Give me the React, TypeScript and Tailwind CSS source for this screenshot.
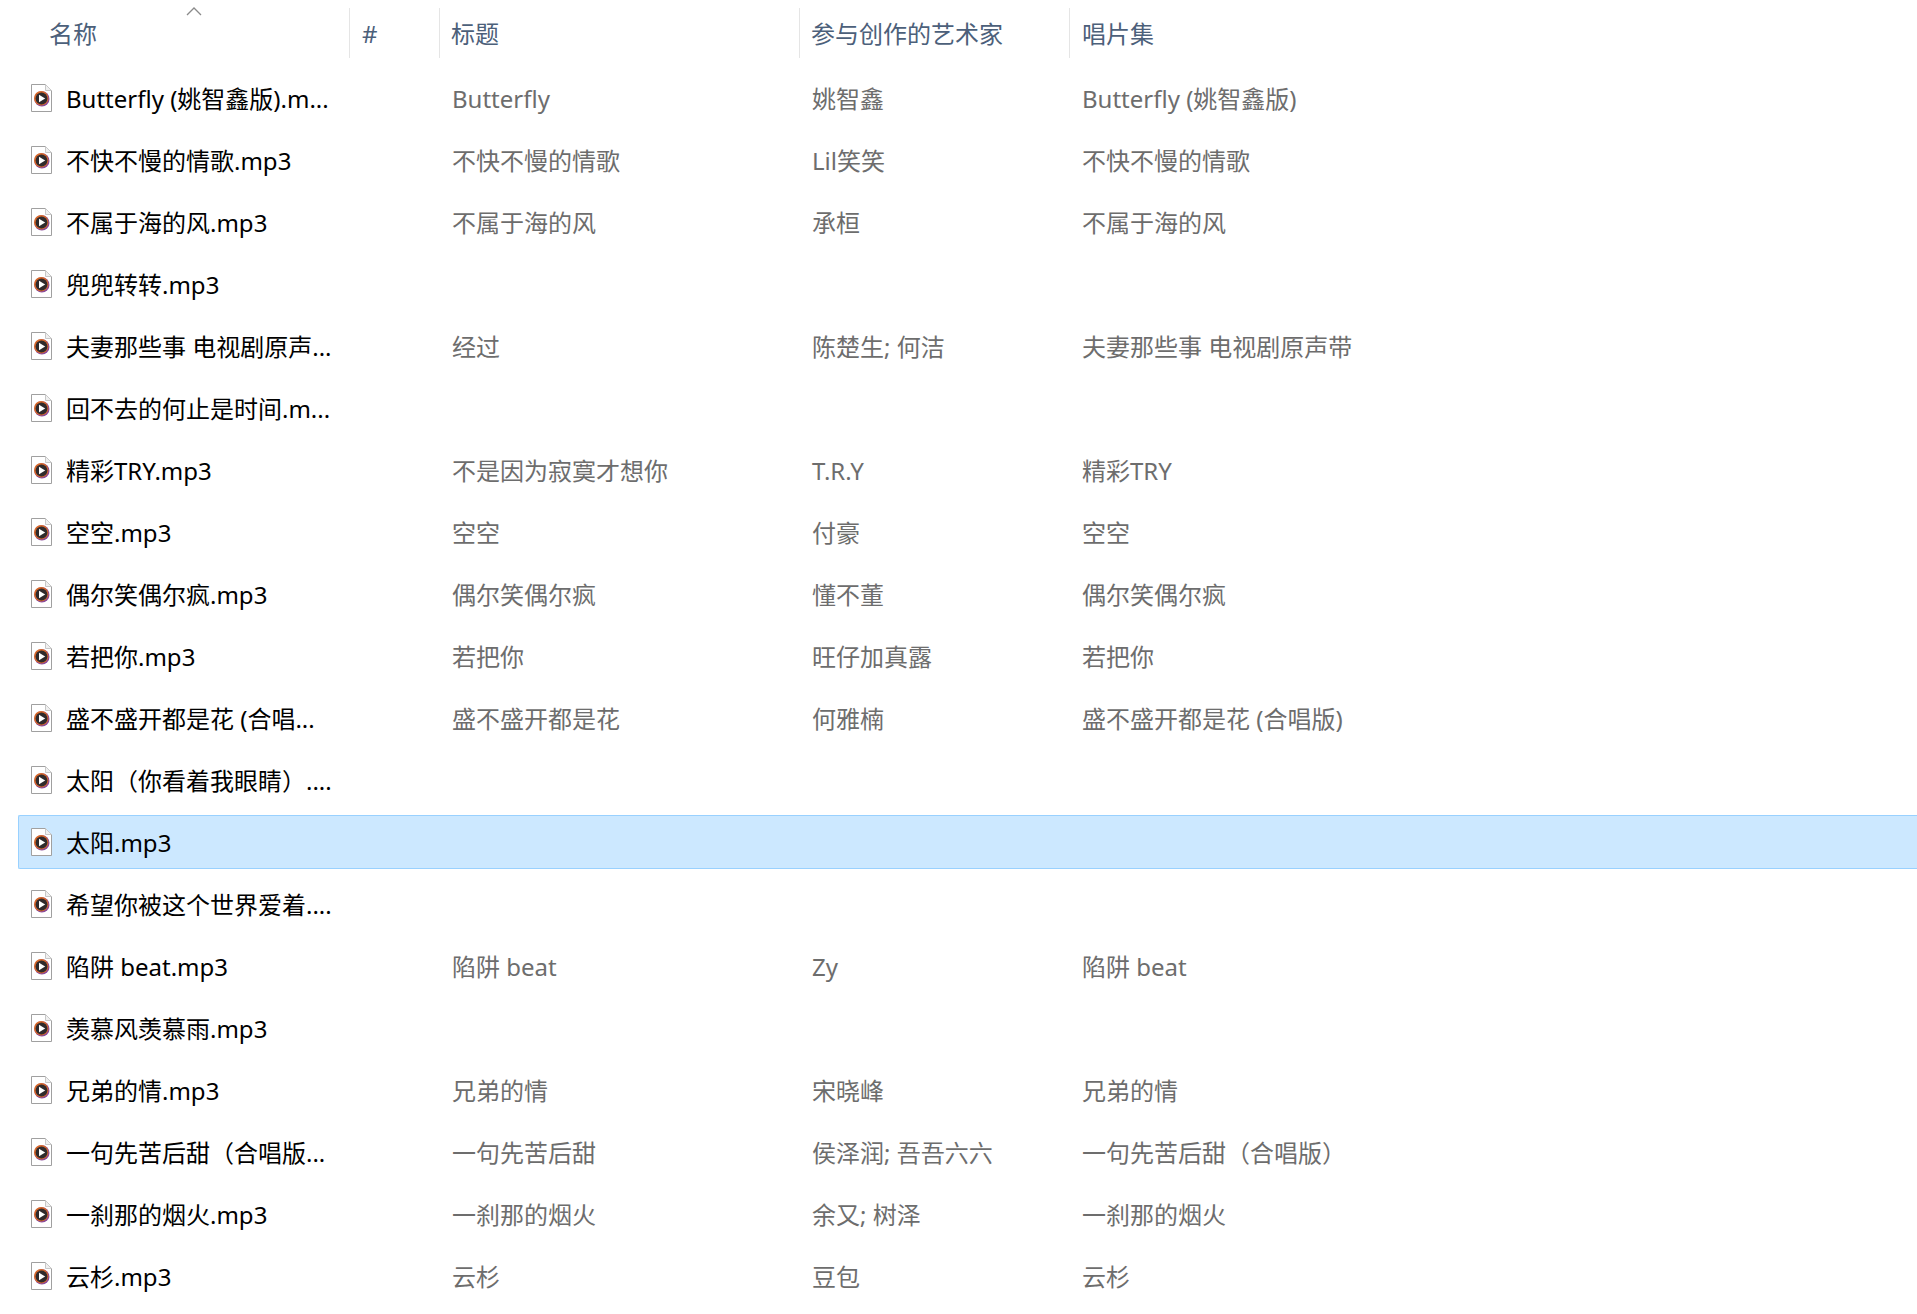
const rows: [string, string?, string?, string?][] = [
  ["Butterfly (姚智鑫版).m...", "Butterfly", "姚智鑫", "Butterfly (姚智鑫版)"],
  ["不快不慢的情歌.mp3", "不快不慢的情歌", "Lil笑笑", "不快不慢的情歌"],
  ["不属于海的风.mp3", "不属于海的风", "承桓", "不属于海的风"],
  ["兜兜转转.mp3"],
  ["夫妻那些事 电视剧原声...", "经过", "陈楚生; 何洁", "夫妻那些事 电视剧原声带"],
  ["回不去的何止是时间.m..."],
  ["精彩TRY.mp3", "不是因为寂寞才想你", "T.R.Y", "精彩TRY"],
  ["空空.mp3", "空空", "付豪", "空空"],
  ["偶尔笑偶尔疯.mp3", "偶尔笑偶尔疯", "懂不董", "偶尔笑偶尔疯"],
  ["若把你.mp3", "若把你", "旺仔加真露", "若把你"],
  ["盛不盛开都是花 (合唱...", "盛不盛开都是花", "何雅楠", "盛不盛开都是花 (合唱版)"],
  ["太阳（你看着我眼睛）...."],
  ["太阳.mp3"],
  ["希望你被这个世界爱着...."],
  ["陷阱 beat.mp3", "陷阱 beat", "Zy", "陷阱 beat"],
  ["羡慕风羡慕雨.mp3"],
  ["兄弟的情.mp3", "兄弟的情", "宋晓峰", "兄弟的情"],
  ["一句先苦后甜（合唱版...", "一句先苦后甜", "侯泽润; 吾吾六六", "一句先苦后甜（合唱版）"],
  ["一刹那的烟火.mp3", "一刹那的烟火", "余又; 树泽", "一刹那的烟火"],
  ["云杉.mp3", "云杉", "豆包", "云杉"],
];

function FileIcon() {
  return (
    <svg width="21" height="28" viewBox="0 0 21 28" className="shrink-0 -mt-[2px]">
      <path d="M0.5 0.5H14.5L20.5 6.5V27.5H0.5Z" fill="#fff" stroke="#a0a0a0" />
      <path d="M14.5 0.5V6.5H20.5" fill="#f0f0f0" stroke="#c8c8c8" />
      <circle cx="10.9" cy="14.9" r="7.6" fill="#8a4a9a" />
      <circle cx="10.2" cy="14.2" r="7.2" fill="#d8682a" />
      <circle cx="10.5" cy="14.5" r="5.9" fill="#2f2a2c" />
      <path d="M8 10.8L14.2 14.5L8 18.2Z" fill="#fff" />
    </svg>
  );
}

function Header({ w, label, pad, first }: { w: string; label: string; pad: string; first?: boolean }) {
  return (
    <div className={`${w} ${pad} ${first ? "" : "border-l border-[#e5e5e5]"} h-[50px] flex items-center shrink-0`}>
      <span className="pt-[2px]">{label}</span>
    </div>
  );
}

export default function App() {
  return (
    <div
      className="w-[1917px] h-[1314px] overflow-hidden bg-white text-[24px] leading-[32px]"
      style={{ fontFamily: '"Noto Sans", "Noto Sans CJK SC", sans-serif' }}
    >
      <div className="relative flex pt-[8px] h-[70px] text-[#4c607a]">
        <svg width="16" height="10" viewBox="0 0 16 10" className="absolute left-[186px] top-[7px]">
          <path d="M1 8L8 1L15 8" fill="none" stroke="#8a8a8a" strokeWidth="1.3" />
        </svg>
        <Header w="w-[349px]" pad="pl-[49px]" first label="名称" />
        <Header w="w-[90px]" pad="pl-[12px]" label="#" />
        <Header w="w-[360px]" pad="pl-[11px]" label="标题" />
        <Header w="w-[270px]" pad="pl-[11px]" label="参与创作的艺术家" />
        <Header w="w-[400px]" pad="pl-[12px]" label="唱片集" />
      </div>
      <div className="flex flex-col gap-[8px] pl-[18px] pt-[1px]">
        {rows.map(([name, title, artist, album], i) => (
          <div
            key={i}
            className={`flex items-center h-[54px] pt-[2px] border rounded-l-[2px] border-r-0 ${
              i === 12 ? "bg-[#cce8ff] border-[#99d1ff]" : "border-transparent"
            }`}
          >
            <div className="w-[433px] shrink-0 flex items-center pl-[12px] text-black">
              <FileIcon />
              <span className="ml-[14px] whitespace-nowrap">{name}</span>
            </div>
            <div className="w-[360px] shrink-0 text-[#6d6d6d] whitespace-nowrap">{title}</div>
            <div className="w-[270px] shrink-0 text-[#6d6d6d] whitespace-nowrap">{artist}</div>
            <div className="text-[#6d6d6d] whitespace-nowrap">{album}</div>
          </div>
        ))}
      </div>
    </div>
  );
}
